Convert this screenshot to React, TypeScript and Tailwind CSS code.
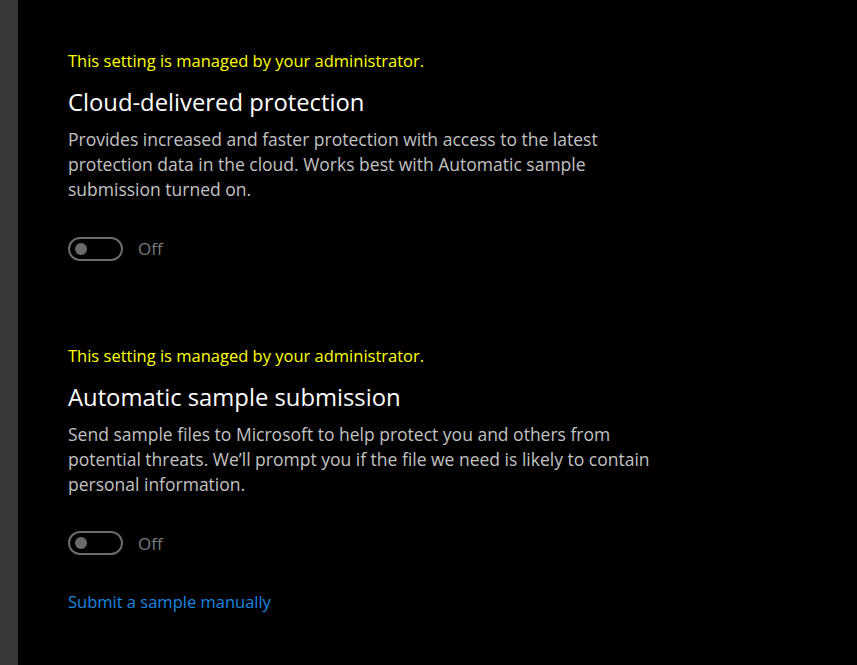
import React from 'react'

type SettingProps = {
  title: string
  description: string
  descWidth: string
}

function Toggle() {
  return (
    <div className="flex items-center gap-[15px]">
      <div className="w-[55px] h-[24px] rounded-full border-2 border-[#6b6b6b] flex items-center px-[5px]">
        <div className="w-[12px] h-[12px] rounded-full bg-[#6b6b6b]" />
      </div>
      <span className="text-[17px] text-[#7a7a7a]">Off</span>
    </div>
  )
}

function Setting({ title, description, descWidth }: SettingProps) {
  return (
    <div className="flex flex-col">
      <p className="text-[16.5px] leading-[20px] text-[#ffff00]">This setting is managed by your administrator.</p>
      <h2 className="mt-[18px] text-[23.8px] leading-[26px] text-white">{title}</h2>
      <p className={`mt-[12px] ${descWidth} text-[17.5px] leading-[25px] text-[#c2c2c2]`}>{description}</p>
      <div className="mt-[34px]">
        <Toggle />
      </div>
    </div>
  )
}

export default function App() {
  return (
    <div className="flex w-[857px] h-[665px] bg-black overflow-hidden" style={{ fontFamily: '"Segoe UI", "Open Sans", "Noto Sans", sans-serif' }}>
      <div className="w-[18px] shrink-0 bg-[#393939]" />
      <div className="flex-1 pl-[50px] pt-[51px] flex flex-col">
        <Setting
          title="Cloud-delivered protection"
          descWidth="w-[560px]"
          description="Provides increased and faster protection with access to the latest protection data in the cloud. Works best with Automatic sample submission turned on."
        />
        <div className="mt-[84px]">
          <Setting
            title="Automatic sample submission"
            descWidth="w-[610px]"
            description="Send sample files to Microsoft to help protect you and others from potential threats. We’ll prompt you if the file we need is likely to contain personal information."
          />
        </div>
        <a href="#" className="mt-[35px] text-[16.5px] leading-[22px] text-[#1a86e0]">Submit a sample manually</a>
      </div>
    </div>
  )
}
